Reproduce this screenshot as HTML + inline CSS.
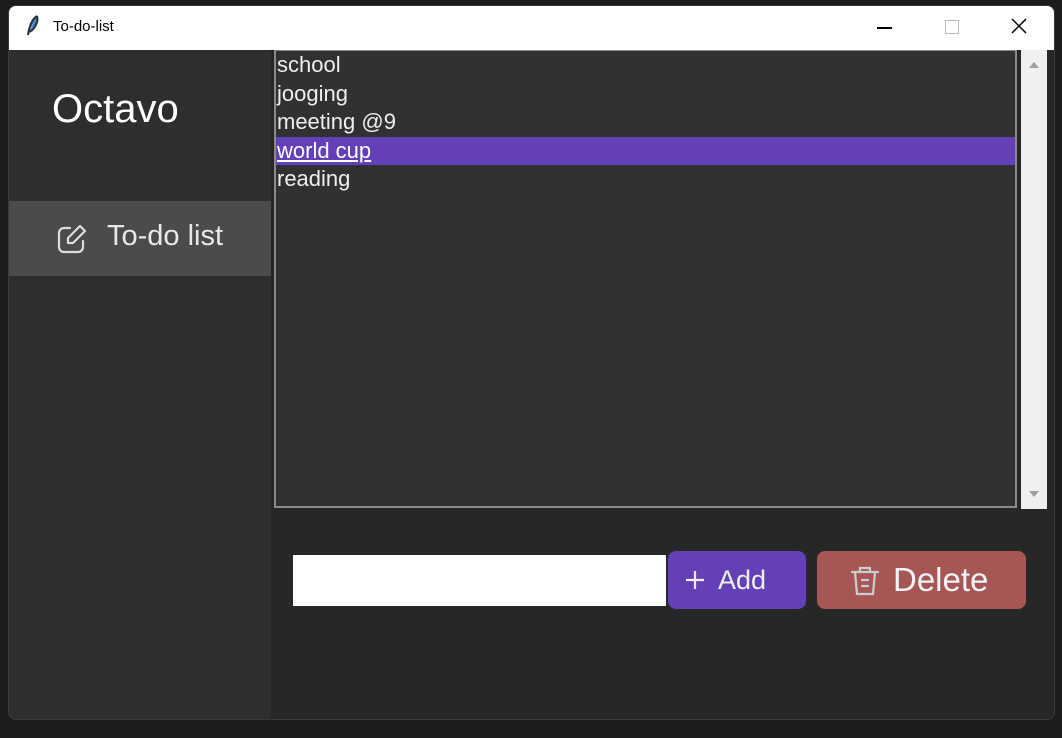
<!DOCTYPE html>
<html><head><style>
body{margin:0;width:1062px;height:738px;background:#1c1c1c;position:relative;overflow:hidden;font-family:"Liberation Sans",sans-serif}
.win{position:absolute;left:8px;top:5px;width:1047px;height:715px;background:#272727;border-radius:8px;overflow:hidden;border:1px solid #3a3a3a;box-sizing:border-box}
.title{position:absolute;left:0;top:0;width:100%;height:44px;background:#fff;color:#000;font-size:15px}
.side{position:absolute;left:0;top:44px;width:262px;height:671px;background:#2e2e2e}
.nav{position:absolute;left:0;top:151px;width:262px;height:75px;background:#4b4b4b}
.lb{position:absolute;left:265px;top:44px;width:743px;height:458px;background:#313131;border:2px solid #8a8a8a;border-top:1px solid #8a8a8a;box-sizing:border-box;color:#eee;font-size:22px}
.lb div{height:28.5px;line-height:28px;padding-left:1px}
.sb{position:absolute;left:1012px;top:44px;width:26px;height:459px;background:#f0f0f0}
</style></head><body>
<div class="win">
<div class="title">
<svg style="position:absolute;left:16px;top:8px" width="16" height="24" viewBox="0 0 16 24"><path d="M12 2 C6 6 4 14 3 21 M12 2 C14 8 9 16 4 18" stroke="#234" stroke-width="2" fill="#4a7fc0"/></svg>
<span style="position:absolute;left:44px;top:12px">To-do-list</span>
<div style="position:absolute;left:868px;top:21px;width:15px;height:1.5px;background:#000"></div>
<div style="position:absolute;left:936px;top:14px;width:12px;height:12px;border:1px solid #bbb"></div>
<svg style="position:absolute;left:1002px;top:12px" width="16" height="16"><path d="M1 1L15 15M15 1L1 15" stroke="#000" stroke-width="1.5"/></svg>
</div>
<div class="side">
<div style="position:absolute;left:43px;top:37px;color:#fff;font-size:40px">Octavo</div>
<div class="nav">
<svg style="position:absolute;left:47px;top:22px" width="32" height="32" viewBox="0 0 32 32" fill="none" stroke="#ddd" stroke-width="2.2" stroke-linecap="round" stroke-linejoin="round"><path d="M14 5H8a5 5 0 0 0-5 5v14a5 5 0 0 0 5 5h14a5 5 0 0 0 5-5v-6"/><path d="M24 3l5 5-12 12h-5v-5z"/></svg>
<span style="position:absolute;left:98px;top:19px;color:#e8e8e8;font-size:29px">To-do list</span>
</div>
</div>
<div class="lb">
<div>school</div><div>jooging</div><div>meeting @9</div>
<div style="background:#6340b8;text-decoration:underline;color:#fff">world cup</div>
<div>reading</div>
</div>
<div class="sb">
<svg style="position:absolute;left:7px;top:9px" width="12" height="10"><path d="M1 9L6 3L11 9Z" fill="#a0a0a0"/></svg>
<svg style="position:absolute;left:7px;top:440px" width="12" height="10"><path d="M1 1L6 7L11 1Z" fill="#a0a0a0"/></svg>
</div>
<div style="position:absolute;left:284px;top:549px;width:373px;height:51px;background:#fff"></div>
<div style="position:absolute;left:659px;top:545px;width:138px;height:58px;background:#6340b8;border-radius:8px;color:#eee;font-size:27px;line-height:58px">
<svg style="position:absolute;left:17px;top:19px" width="20" height="20"><path d="M10 1V19M1 10H19" stroke="#eee" stroke-width="2.2"/></svg><span style="position:absolute;left:50px">Add</span></div>
<div style="position:absolute;left:808px;top:545px;width:209px;height:58px;background:#a65755;border-radius:8px;color:#f3f3f3;font-size:33px;line-height:58px">
<svg style="position:absolute;left:33px;top:14px" width="30" height="32" viewBox="0 0 30 32" fill="none" stroke="#ccc" stroke-width="2.2" stroke-linecap="round"><path d="M2 7H28M10 7V3H20V7M5 7L7 29H23L25 7M12 15H18M12 21H18"/></svg>
<span style="position:absolute;left:76px">Delete</span></div>
</div>
</body></html>
